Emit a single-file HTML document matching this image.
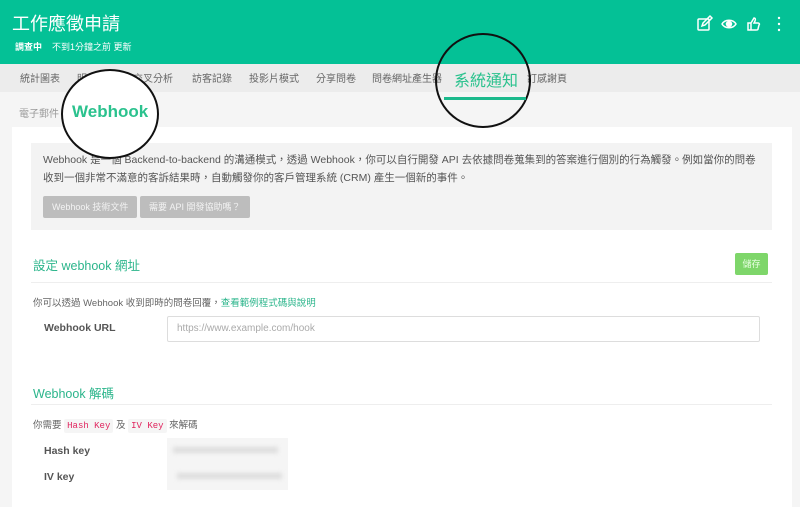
<!DOCTYPE html>
<html><head><meta charset="utf-8"><style>
*{margin:0;padding:0;box-sizing:border-box}
body{width:800px;height:501px;overflow:hidden;background:#f5f5f5;font-family:"Liberation Sans","Noto Sans CJK TC",sans-serif;position:relative;color:#555}
.hd{position:absolute;left:0;top:0;width:800px;height:64px;background:#04c196;color:#fff}
.hd h1{position:absolute;left:12px;top:10px;font-size:18px;font-weight:normal}
.hd .s{position:absolute;left:15px;top:40px;font-size:9px}
.nav{position:absolute;left:0;top:64px;width:800px;height:28px;background:#ececec;font-size:10px;color:#666}
.nav span{position:absolute;top:6px}
.card{position:absolute;left:12px;top:127px;width:780px;height:380px;background:#fff}
.info{position:absolute;left:31px;top:143px;width:741px;height:87px;background:#f3f3f3;font-size:10.5px;line-height:18px;color:#555;padding:8px 12px}
.btn{position:absolute;top:196px;height:22px;background:#bdbdbd;color:#f3f3f3;font-size:9px;line-height:22px;padding:0 9px;border-radius:2px}
.h2{position:absolute;left:33px;font-size:12.5px;color:#2bb58b}
.hr{position:absolute;left:31px;width:741px;height:1px;background:#eee}
.t{position:absolute;font-size:9.5px;color:#666}
.lb{position:absolute;left:44px;font-size:10.5px;font-weight:bold;color:#555}
code{font-family:"Liberation Mono",monospace;background:#f5f5f5;color:#e0245e;padding:2px 3px;font-size:9px;border-radius:2px}
.circ{position:absolute;border:2.5px solid #111;border-radius:50%;background:#fff}
</style></head><body>
<div class="hd"><h1>工作應徵申請</h1><div class="s"><b>調查中</b>&nbsp;&nbsp;&nbsp;&nbsp;不到1分鐘之前 更新</div>
<svg style="position:absolute;left:696px;top:14px" width="90" height="20" viewBox="0 0 90 20" fill="none" stroke="#fff" stroke-width="1.5">
<rect x="2" y="5" width="11" height="11" rx="1"/><path d="M6 12l1-3 7-7 2 2-7 7z"/>
<path d="M26 10c3-5 11-5 14 0c-3 5-11 5-14 0z"/><circle cx="33" cy="10" r="2.5" fill="#fff"/>
<path d="M52 9h3v7h-3zM55 9l3-5c1 0 2 1 1 3l-1 2h4c1 0 2 1 1 2l-1 4c0 1-1 1-2 1h-5"/>
<circle cx="83" cy="4" r="1.2" fill="#fff" stroke="none"/><circle cx="83" cy="10" r="1.2" fill="#fff" stroke="none"/><circle cx="83" cy="16" r="1.2" fill="#fff" stroke="none"/>
</svg></div>
<div class="nav"><span style="left:20px">統計圖表</span><span style="left:77px">明細</span><span style="left:133px">交叉分析</span><span style="left:192px">訪客記錄</span><span style="left:249px">投影片模式</span><span style="left:316px">分享問卷</span><span style="left:372px">問卷網址產生器</span><span style="left:527px">訂感謝頁</span></div>
<div class="t" style="left:19px;top:105px;font-size:10px;color:#999">電子郵件</div>
<div class="card"></div>
<div class="info">Webhook 是一個 Backend-to-backend 的溝通模式，透過 Webhook，你可以自行開發 API 去依據問卷蒐集到的答案進行個別的行為觸發。例如當你的問卷收到一個非常不滿意的客訴結果時，自動觸發你的客戶管理系統 (CRM) 產生一個新的事件。</div>
<div class="btn" style="left:43px">Webhook 技術文件</div>
<div class="btn" style="left:140px">需要 API 開發協助嗎？</div>
<div class="h2" style="top:255px">設定 webhook 網址</div>
<div style="position:absolute;left:735px;top:253px;width:33px;height:22px;background:#7ed66a;color:#eaffe4;font-size:9px;line-height:22px;text-align:center;border-radius:2px">儲存</div>
<div class="hr" style="top:282px"></div>
<div class="t" style="left:33px;top:295px">你可以透過 Webhook 收到即時的問卷回覆，<span style="color:#2bb58b">查看範例程式碼與說明</span></div>
<div class="lb" style="top:322px">Webhook URL</div>
<div style="position:absolute;left:167px;top:316px;width:593px;height:26px;border:1px solid #ddd;border-radius:2px;font-size:10px;color:#aaa;padding:6px 9px">https://www.example.com/hook</div>
<div class="h2" style="top:383px">Webhook 解碼</div>
<div class="hr" style="top:404px"></div>
<div class="t" style="left:33px;top:417px">你需要 <code>Hash Key</code> 及 <code>IV Key</code> 來解碼</div>
<div class="lb" style="top:445px">Hash key</div>
<div class="lb" style="top:471px">IV key</div>
<div style="position:absolute;left:167px;top:438px;width:121px;height:52px;background:#f5f5f5"></div>
<div style="position:absolute;left:173px;top:447px;width:105px;height:6px;background:#ddd;filter:blur(2px)"></div>
<div style="position:absolute;left:177px;top:473px;width:105px;height:6px;background:#ddd;filter:blur(2px)"></div>
<div class="circ" style="left:61px;top:69px;width:98px;height:90px"></div>
<div style="position:absolute;left:72px;top:102px;font-size:17px;font-weight:bold;color:#2bc28e">Webhook</div>
<div class="circ" style="left:435px;top:33px;width:96px;height:95px;background:transparent"></div>
<div style="position:absolute;left:454px;top:67px;font-size:16px;color:#2bc28e;font-family:'Noto Sans CJK TC',sans-serif">系統通知</div>
<div style="position:absolute;left:444px;top:97px;width:82px;height:3px;background:#1bb98c"></div>
</body></html>
